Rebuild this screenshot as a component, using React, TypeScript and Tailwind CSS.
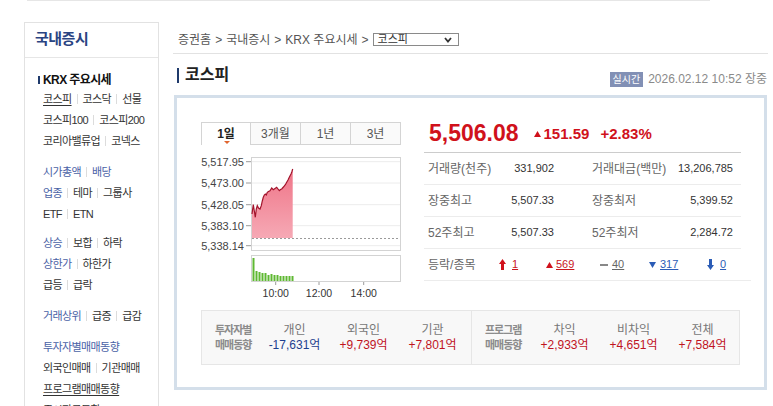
import React from 'react';

const FONT = "font-['Liberation_Sans','Noto_Sans_CJK_KR',sans-serif]";

function Bar() {
    return <span className="mx-[5px] inline-block h-[10px] w-px bg-[#dcdcdc]" />;
}

type Item = { t: string; blue?: boolean; u?: boolean };

function NavRow({ items }: { items: Item[] }) {
    return (
        <div className="flex h-[21px] items-center">
            {items.map((it, i) => (
                <React.Fragment key={it.t}>
                    {i > 0 && <Bar />}
                    <span className={`${it.blue ? 'text-[#4a62a6]' : 'text-[#333]'} ${it.u ? 'underline underline-offset-2' : ''}`}>{it.t}</span>
                </React.Fragment>
            ))}
        </div>
    );
}

function Sidebar() {
    return (
        <aside className="ml-[24px] h-[400px] w-[135px] shrink-0 border-x border-t border-[#e2e2e2]">
            <div className="flex h-[35px] items-center border-b border-[#e6e6e6] pl-[10px] pb-[1px]">
                <span className="text-[15px] font-bold tracking-[-0.5px] text-[#2a4482]">국내증시</span>
            </div>
            <div className="pl-[18px] pt-[13px] text-[11px] leading-[14px] tracking-[-0.6px]">
                <div className="-ml-[5px] flex h-[17px] items-center">
                    <span className="mr-[3px] h-[8px] w-[2px] bg-[#1f3a6b]" />
                    <span className="text-[12px] font-bold text-[#111]">KRX 주요시세</span>
                </div>
                <NavRow items={[{ t: '코스피', u: true }, { t: '코스닥' }, { t: '선물' }]} />
                <NavRow items={[{ t: '코스피100' }, { t: '코스피200' }]} />
                <NavRow items={[{ t: '코리아밸류업' }, { t: '코넥스' }]} />
                <div className="mt-[10px]" />
                <NavRow items={[{ t: '시가총액', blue: true }, { t: '배당', blue: true }]} />
                <NavRow items={[{ t: '업종', blue: true }, { t: '테마' }, { t: '그룹사' }]} />
                <NavRow items={[{ t: 'ETF' }, { t: 'ETN' }]} />
                <div className="mt-[8px]" />
                <NavRow items={[{ t: '상승', blue: true }, { t: '보합' }, { t: '하락' }]} />
                <NavRow items={[{ t: '상한가', blue: true }, { t: '하한가' }]} />
                <NavRow items={[{ t: '급등' }, { t: '급락' }]} />
                <div className="mt-[10px]" />
                <NavRow items={[{ t: '거래상위', blue: true }, { t: '급증' }, { t: '급감' }]} />
                <div className="mt-[10px]" />
                <NavRow items={[{ t: '투자자별매매동향', blue: true }]} />
                <NavRow items={[{ t: '외국인매매' }, { t: '기관매매' }]} />
                <NavRow items={[{ t: '프로그램매매동향', u: true }]} />
                <NavRow items={[{ t: '증시자금동향' }]} />
            </div>
        </aside>
    );
}

// chart data in local svg coords
const pts: [number, number][] = [
    [51, 69], [52.3, 59.7], [53.3, 66], [54.3, 72.3], [55.3, 64], [56.3, 60.7], [57.5, 63], [59, 64], [60.3, 60.7],
    [61.3, 56], [62.3, 52.3], [63.3, 50], [64.3, 49], [65.3, 50], [66.3, 47.3], [67.5, 46.5], [69, 45.7], [70.7, 43],
    [72.3, 44.7], [74, 43.5], [75.7, 42.3], [77, 44], [78.3, 45.7], [79.5, 44.5], [80.7, 44], [82, 42.5], [83, 41.3],
    [84.5, 39.5], [85.7, 37.3], [87, 35], [88.3, 32.3], [89.2, 30.5], [90, 29], [90.8, 27], [91.7, 24],
];
const vols = [23, 10, 9, 8, 8, 6, 7, 6, 6, 5, 5, 5, 5, 5];
const grid = [
    { y: 16.7, l: '5,517.95' },
    { y: 38, l: '5,473.00' },
    { y: 59.7, l: '5,428.05' },
    { y: 80.7, l: '5,383.10' },
    { y: 100.7, l: '5,338.14' },
];
const times = [
    { x: 74.7, l: '10:00' },
    { x: 118, l: '12:00' },
    { x: 162.7, l: '14:00' },
];

function Chart() {
    const line = pts.map(p => p.join(',')).join(' ');
    const area = `M51,93 L${line.replace(/ /g, ' L')} L91.7,93 Z`;
    return (
        <div className="w-[200px]">
            <div className="flex h-[23px] text-[12px] leading-[14px] text-[#555]">
                <div className="relative flex w-[50px] items-center justify-center border-x border-t border-[#d4d4d4] bg-white font-bold text-[#222]">
                    1일
                    <span className="absolute bottom-[1px] left-[22px] h-0 w-0 border-x-[3px] border-t-[3px] border-x-transparent border-t-[#e0652f]" />
                </div>
                <div className="flex w-[50px] items-center justify-center border-y border-r border-[#d4d4d4] bg-[#fafafa]">3개월</div>
                <div className="flex w-[50px] items-center justify-center border-y border-r border-[#d4d4d4] bg-[#fafafa]">1년</div>
                <div className="flex w-[50px] items-center justify-center border-y border-r border-[#d4d4d4] bg-[#fafafa]">3년</div>
            </div>
            <svg width="200" height="155" className="block">
                <defs>
                    <linearGradient id="fillg" x1="0" y1="0" x2="0" y2="1">
                        <stop offset="0" stopColor="#ef7487" />
                        <stop offset="1" stopColor="#f6a9b5" />
                    </linearGradient>
                </defs>
                {grid.map(g => (
                    <g key={g.l}>
                        <line x1="50" x2="200" y1={g.y} y2={g.y} stroke="#ececec" />
                        <line x1="45" x2="50" y1={g.y} y2={g.y} stroke="#9a9a9a" />
                        <text x="43" y={g.y + 4} textAnchor="end" fontSize="11" fill="#444" fontFamily="Liberation Sans, sans-serif">{g.l}</text>
                    </g>
                ))}
                <rect x="50.5" y="12.5" width="149" height="93" fill="none" stroke="#d3d3d3" />
                <line x1="51" x2="199" y1="93.5" y2="93.5" stroke="#9a9a9a" strokeDasharray="2 2" />
                <path d={area} fill="url(#fillg)" />
                <polyline points={line} fill="none" stroke="#a3142c" strokeWidth="1.2" />
                <rect x="50.5" y="110.5" width="149" height="26" fill="none" stroke="#d3d3d3" />
                {vols.map((h, i) => (
                    <rect key={i} x={51.5 + i * 3} y={136 - h} width="2" height={h} fill="#5fb832" />
                ))}
                {times.map(t => (
                    <g key={t.l}>
                        <line x1={t.x} x2={t.x} y1="137" y2="140" stroke="#9a9a9a" />
                        <text x={t.x} y="152" textAnchor="middle" fontSize="10.5" fill="#333" fontFamily="Liberation Sans, sans-serif">{t.l}</text>
                    </g>
                ))}
            </svg>
        </div>
    );
}

function StatRow({ a, av, b, bv }: { a: string; av: string; b: string; bv: string }) {
    return (
        <div className="flex h-[32px] items-center border-b border-[#ececec] pl-[4px]">
            <div className="flex w-[126px] justify-between">
                <span className="text-[12px] text-[#666]">{a}</span>
                <span className="text-[11px] text-[#333]">{av}</span>
            </div>
            <div className="ml-[38px] flex w-[141px] justify-between">
                <span className="text-[12px] text-[#666]">{b}</span>
                <span className="text-[11px] text-[#333]">{bv}</span>
            </div>
        </div>
    );
}

const ArrowUp = ({ c }: { c: string }) => (
    <svg width="7" height="11" viewBox="0 0 7 11"><path d="M3.5 0 L7 5 H5 V11 H2 V5 H0 Z" fill={c} /></svg>
);
const ArrowDown = ({ c }: { c: string }) => (
    <svg width="7" height="11" viewBox="0 0 7 11"><path d="M3.5 11 L7 6 H5 V0 H2 V6 H0 Z" fill={c} /></svg>
);
const TriUp = ({ c }: { c: string }) => (
    <svg width="7" height="6" viewBox="0 0 7 6"><path d="M3.5 0 L7 6 H0 Z" fill={c} /></svg>
);
const TriDown = ({ c }: { c: string }) => (
    <svg width="7" height="6" viewBox="0 0 7 6"><path d="M0 0 H7 L3.5 6 Z" fill={c} /></svg>
);

function Quote() {
    return (
        <div className="ml-[23px] w-[317px]">
            <div className="flex h-[55px] items-end border-b border-[#cccccc] pb-[7px] pl-[5px] text-[#d0111b]">
                <span className="text-[23px] font-bold leading-[24px]">5,506.08</span>
                <span className="ml-[15px] mb-[3px] flex items-center gap-[3px] text-[15px] font-bold leading-[16px]">
                    <TriUp c="#d0111b" />151.59
                </span>
                <span className="ml-[11px] mb-[3px] text-[15px] font-bold leading-[16px]">+2.83%</span>
            </div>
            <StatRow a="거래량(천주)" av="331,902" b="거래대금(백만)" bv="13,206,785" />
            <StatRow a="장중최고" av="5,507.33" b="장중최저" bv="5,399.52" />
            <StatRow a="52주최고" av="5,507.33" b="52주최저" bv="2,284.72" />
            <div className="flex h-[32px] w-[327px] items-center border-b border-[#ececec] pl-[4px] text-[11px]">
                <span className="w-[71px] text-[12px] text-[#666]">등락/종목</span>
                <span className="flex w-[47px] items-center gap-[6px] text-[#c8161d]"><ArrowUp c="#d0111b" /><span className="underline">1</span></span>
                <span className="flex w-[54px] items-center gap-[3px] text-[#c8161d]"><TriUp c="#d0111b" /><span className="underline">569</span></span>
                <span className="flex w-[49px] items-center gap-[4px] text-[#666]"><span className="h-[2px] w-[8px] bg-[#888]" /><span className="underline">40</span></span>
                <span className="flex w-[58px] items-center gap-[4px] text-[#2b5cb6]"><TriDown c="#2b5cb6" /><span className="underline">317</span></span>
                <span className="flex items-center gap-[6px] text-[#2b5cb6]"><ArrowDown c="#2b5cb6" /><span className="underline">0</span></span>
            </div>
        </div>
    );
}

function Flow({ title, cols }: { title: [string, string]; cols: { h: string; v: string; up: boolean }[] }) {
    return (
        <div className="flex pt-[12px] text-[12px] leading-[15px]">
            <div className="w-[45px] whitespace-nowrap text-[11px] font-bold tracking-[-1px] text-[#8c8c8c]">
                <div>{title[0]}</div>
                <div>{title[1]}</div>
            </div>
            {cols.map(c => (
                <div key={c.h} className="w-[69px] text-center">
                    <div className="text-[#777]">{c.h}</div>
                    <div className={c.up ? 'text-[#c0131f]' : 'text-[#1d3f8f]'}>{c.v}</div>
                </div>
            ))}
        </div>
    );
}

export default function App() {
    return (
        <div className={`relative h-[406px] w-[773px] overflow-hidden bg-white text-[#333] ${FONT}`}>
            <div className="ml-[27px] h-px w-[683px] bg-[#e6e6e6]" />
            <div className="mt-[21px] flex items-start">
                <Sidebar />
                <main className="ml-[14px] w-[595px] shrink-0">
                    <div className="flex h-[32px] items-center border-b border-[#e2e2e2] pl-[5px] pt-[4px] text-[12px] leading-[14px] text-[#555]">
                        <span>증권홈</span>
                        <span className="mx-[4px]">&gt;</span>
                        <span>국내증시</span>
                        <span className="mx-[4px]">&gt;</span>
                        <span>KRX 주요시세</span>
                        <span className="mx-[4px]">&gt;</span>
                        <div className="flex h-[13px] w-[86px] items-center justify-between border border-[#8a8a8a] pl-[4px] pr-[6px] text-[11px] leading-[11px] text-[#333]">
                            <span>코스피</span>
                            <svg width="8" height="6" viewBox="0 0 8 6"><path d="M1 1 L4 4.5 L7 1" fill="none" stroke="#333" strokeWidth="1.8" /></svg>
                        </div>
                    </div>
                    <div className="flex h-[41px] items-start justify-between">
                        <div className="ml-[4px] mt-[13px] flex items-center">
                            <span className="h-[15px] w-[2px] bg-[#1f3a6b]" />
                            <span className="ml-[6px] text-[16px] font-bold leading-[16px] text-[#222]">코스피</span>
                        </div>
                        <div className="mr-[1px] mt-[18px] flex items-center">
                            <span className="bg-[#8290b5] px-[3px] text-[10px] leading-[15px] text-white">실시간</span>
                            <span className="ml-[5px] text-[12px] leading-[15px] text-[#8a8a8a]">2026.02.12 10:52 장중</span>
                        </div>
                    </div>
                    <section className="ml-px w-[593px] border-[3px] border-[#d4dfea] bg-white pb-[22px]">
                        <div className="flex items-start">
                            <div className="ml-[24px] mt-[24px]">
                                <Chart />
                            </div>
                            <Quote />
                        </div>
                        <div className="ml-[24px] mt-[10px] flex h-[55px] w-[539px] border border-[#e6e6e6] bg-[#f8f8f8]">
                            <div className="w-[270px] border-r border-[#e6e6e6] pl-[13px]">
                                <Flow
                                    title={['투자자별', '매매동향']}
                                    cols={[
                                        { h: '개인', v: '-17,631억', up: false },
                                        { h: '외국인', v: '+9,739억', up: true },
                                        { h: '기관', v: '+7,801억', up: true },
                                    ]}
                                />
                            </div>
                            <div className="pl-[13px]">
                                <Flow
                                    title={['프로그램', '매매동향']}
                                    cols={[
                                        { h: '차익', v: '+2,933억', up: true },
                                        { h: '비차익', v: '+4,651억', up: true },
                                        { h: '전체', v: '+7,584억', up: true },
                                    ]}
                                />
                            </div>
                        </div>
                    </section>
                </main>
            </div>
        </div>
    );
}
